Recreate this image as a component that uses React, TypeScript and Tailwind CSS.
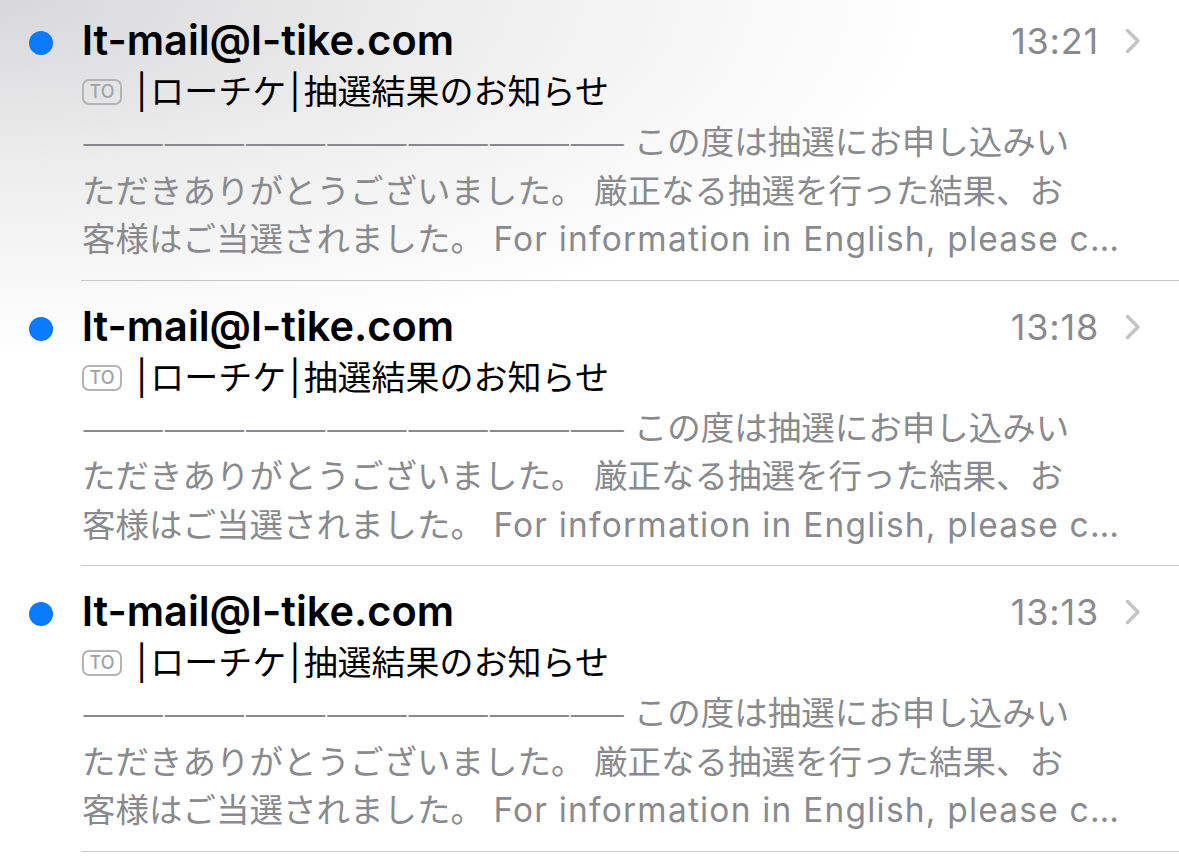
import React from "react";

const mails = [
  { from: "lt-mail@l-tike.com", time: "13:21" },
  { from: "lt-mail@l-tike.com", time: "13:18" },
  { from: "lt-mail@l-tike.com", time: "13:13" },
];

function Chevron() {
  return (
    <svg width="18" height="28" viewBox="0 0 18 28" fill="none" className="shrink-0">
      <path d="M3.5 3.5 L14 14 L3.5 24.5" stroke="#c4c4c7" strokeWidth="3.5" strokeLinecap="round" strokeLinejoin="round" />
    </svg>
  );
}

function MailRow({ from, time }: { from: string; time: string }) {
  return (
    <div className="flex">
      {/* unread dot */}
      <div className="w-[81px] shrink-0 flex justify-center pt-[36px]">
        <div className="w-[24px] h-[24px] rounded-full bg-[#0a7aff]" />
      </div>

      <div className="flex-1 min-w-0 border-b border-[#c8c8cc] pt-[22px] pb-[16px] pr-[37px] pl-[1px]">
        <div className="flex items-center h-[48px]">
          <span className="flex-1 text-[41.5px] font-semibold text-black leading-none">{from}</span>
          <span className="text-[36px] tracking-[0.8px] text-[#8a8a8e] leading-none mr-[25px]">{time}</span>
          <Chevron />
        </div>

        <div className="flex items-center h-[48px] mt-[3px]">
          <span className="flex items-center justify-center w-[40px] h-[26px] border-2 border-[#b4b4b8] rounded-[7px] text-[18px] font-medium text-[#a2a2a6] mr-[11px] leading-none">
            TO
          </span>
          <span className="text-[34px] text-black leading-none whitespace-nowrap">
            <span className="px-[3px]">|</span>ローチケ<span className="px-[3px]">|</span>抽選結果のお知らせ
          </span>
        </div>

        <div className="text-[33.5px] leading-[48.5px] text-[#8a8a8e] whitespace-nowrap">
          <div>
            <span className="font-['Noto_Sans_CJK_JP'] tracking-[-1.15px]">————————————————————</span> この度は抽選にお申し込みい
          </div>
          <div>ただきありがとうございました。 厳正なる抽選を行った結果、お</div>
          <div>
            客様はご当選されました。 <span className="tracking-[1.2px]">For information in English, please c…</span>
          </div>
        </div>
      </div>
    </div>
  );
}

export default function App() {
  return (
    <div className="min-h-screen w-full overflow-hidden bg-white bg-[radial-gradient(ellipse_1100px_420px_at_0%_0%,#d8d8da_0%,#ededee_40%,#ffffff_85%)] font-['Inter','Noto_Sans_CJK_JP',sans-serif]">
      <div className="-mt-[5px]">
        {mails.map((m) => (
          <MailRow key={m.time} from={m.from} time={m.time} />
        ))}
      </div>
    </div>
  );
}
